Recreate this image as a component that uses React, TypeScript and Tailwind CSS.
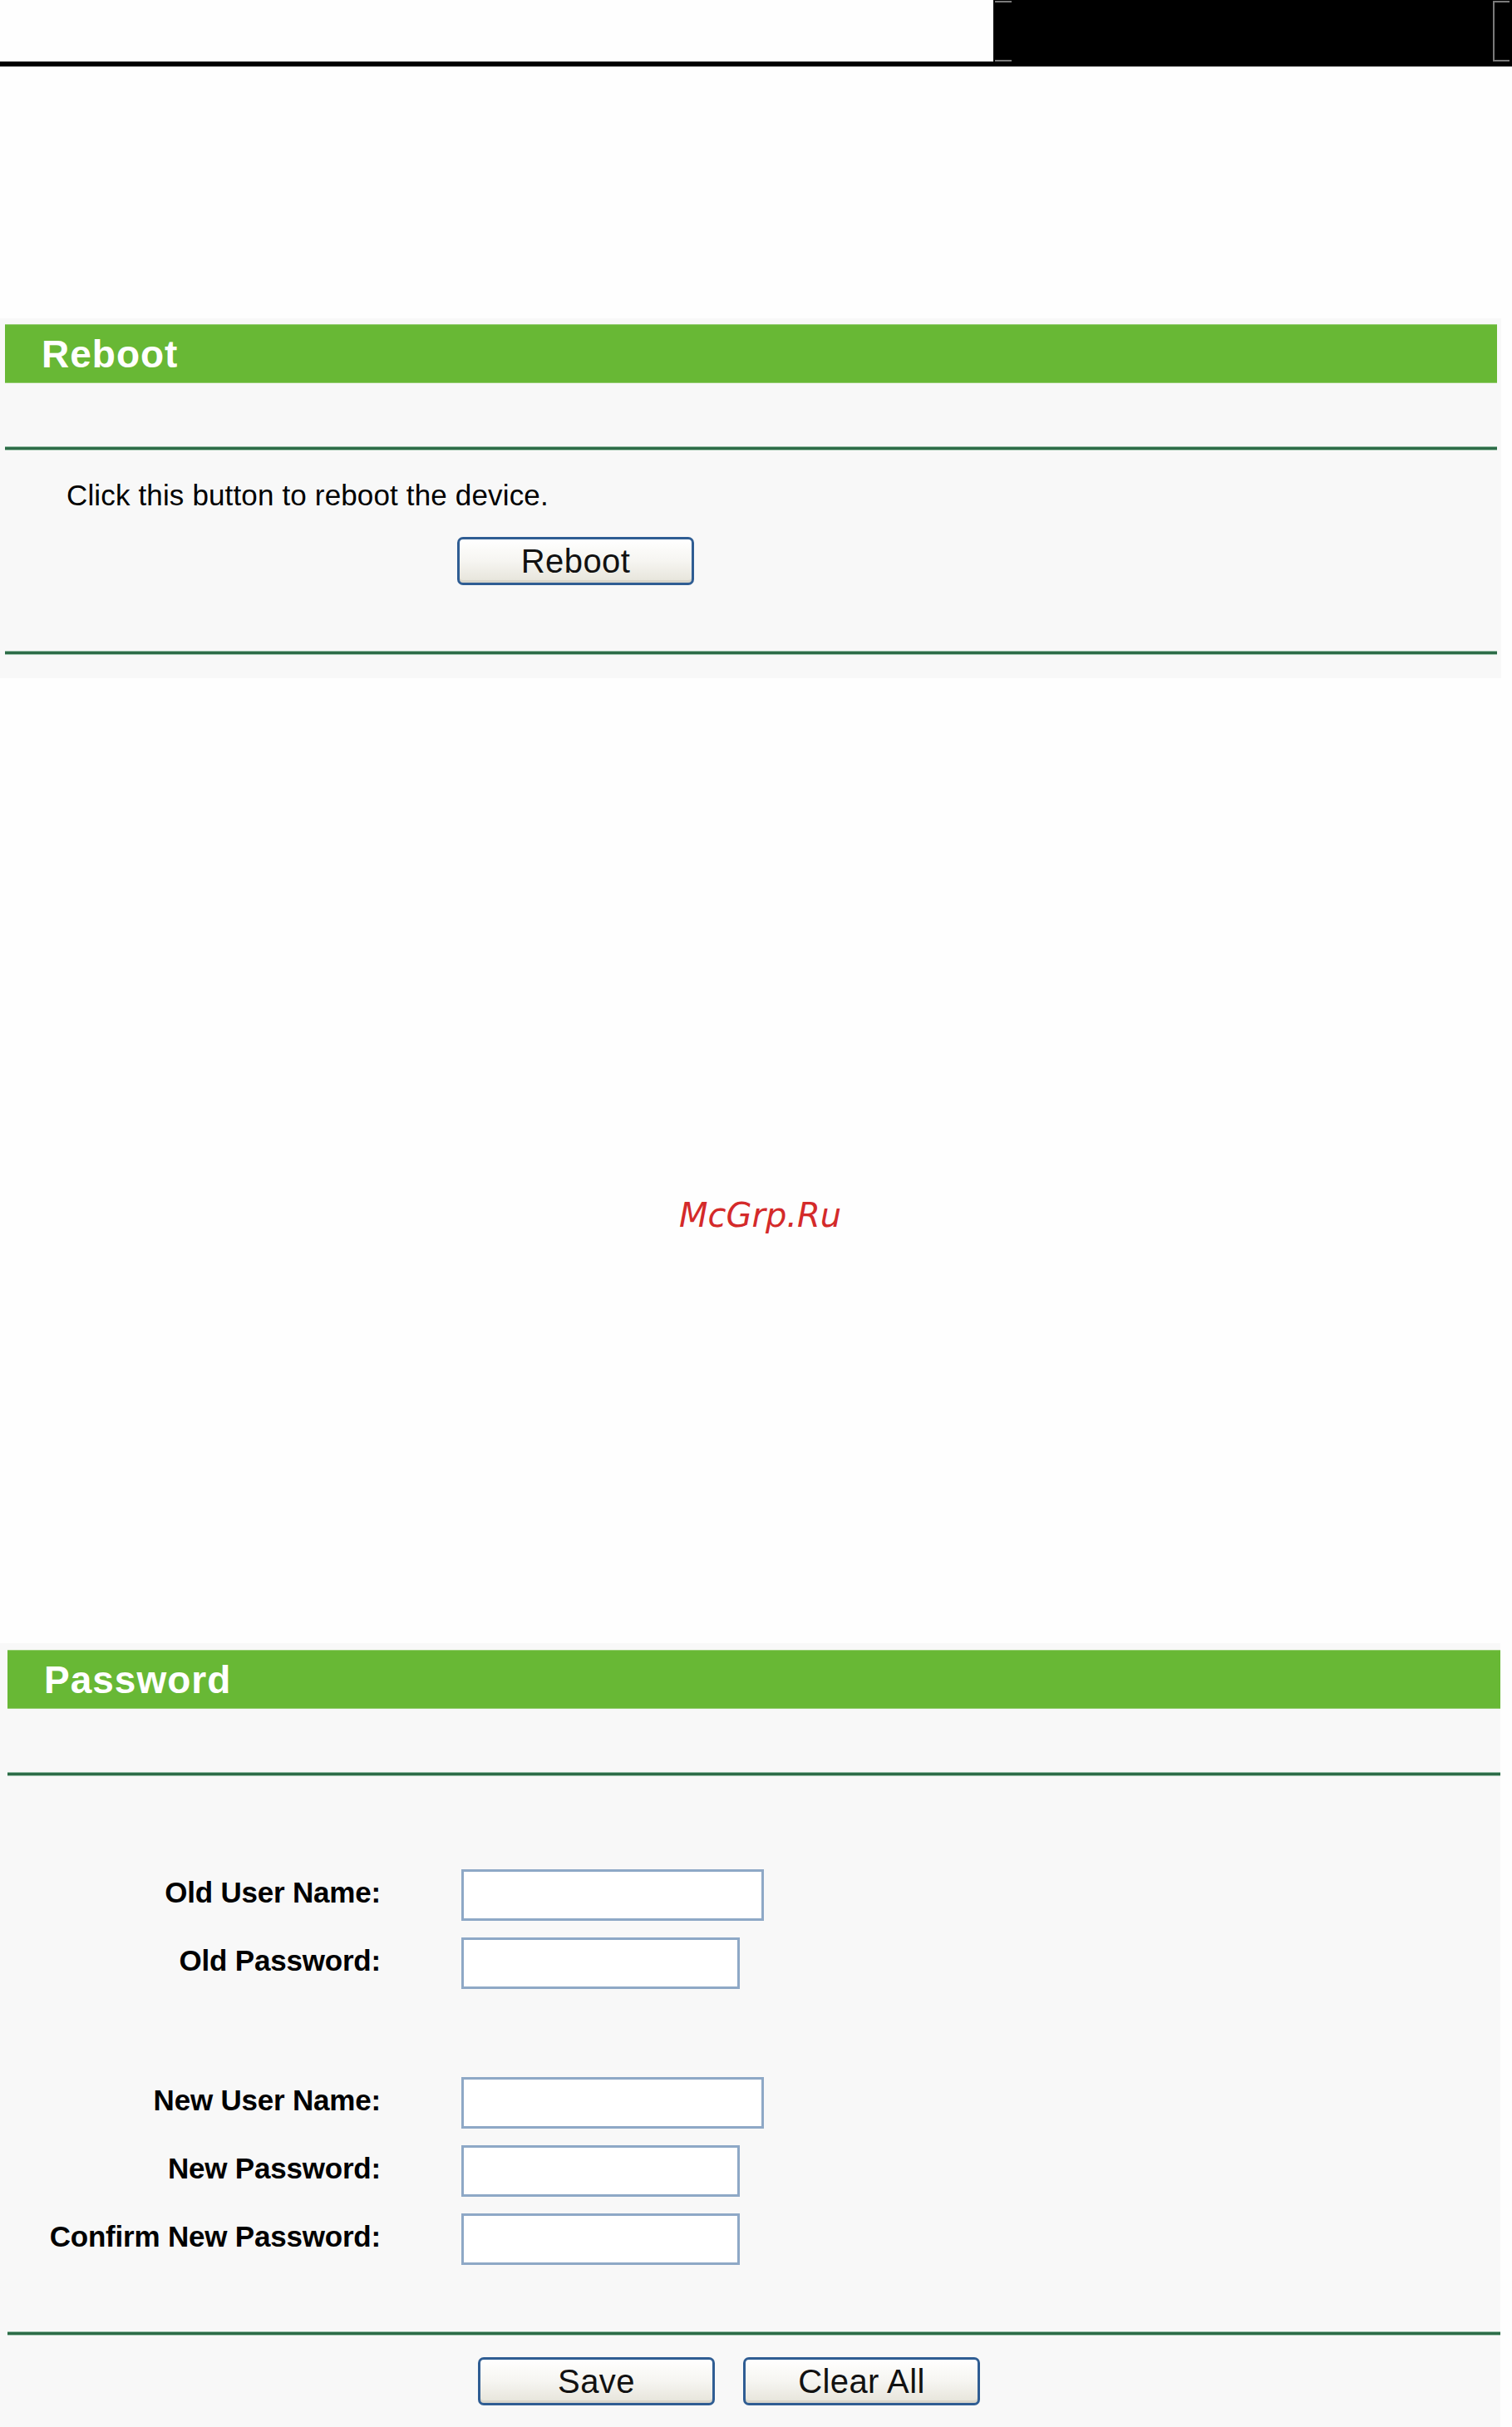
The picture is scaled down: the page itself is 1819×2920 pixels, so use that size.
import React from "react";

const sans = "font-['Liberation_Sans',Arial,sans-serif]";

function SectionHeader({ title, className = "" }: { title: string; className?: string }) {
  return (
    <div
      className={`h-[71px] bg-[#68b835] border-y border-[#93cc6f] flex items-center pl-[44px] ${className}`}
    >
      <span className="text-white font-bold text-[46px] leading-[64px] tracking-[1px]">{title}</span>
    </div>
  );
}

function Rule({ className = "" }: { className?: string }) {
  return (
    <div className={`flex flex-col ${className}`}>
      <div className="h-px bg-[#8fb9a0]" />
      <div className="h-[3px] bg-[#2d6c48]" />
      <div className="h-px bg-[#a9cbb6]" />
    </div>
  );
}

function XpButton({ label, className = "" }: { label: string; className?: string }) {
  return (
    <button
      type="button"
      className={`w-[285px] h-[58px] rounded-[7px] border-[3px] border-[#2f5d93] bg-gradient-to-b from-white via-[#f6f5f1] to-[#e6e4da] text-[40px] leading-none tracking-[0.4px] text-[#111] shadow-[inset_0_-3px_0_#d9d6cb] ${className}`}
    >
      {label}
    </button>
  );
}

function Field({ label, wide }: { label: string; wide?: boolean }) {
  return (
    <div className="flex h-[62px] items-center">
      <label className="w-[458px] text-right font-bold text-[35px] tracking-[-0.2px] text-black pb-[5px]">
        {label}
      </label>
      <input
        type="text"
        className={`ml-[97px] h-[62px] ${wide ? "w-[364px]" : "w-[335px]"} bg-white border-[3px] border-[#8ea8c6] outline-none`}
      />
    </div>
  );
}

export default function App() {
  return (
    <div className={`w-[1819px] h-[2920px] overflow-hidden bg-[#fefefe] ${sans}`}>
      {/* page top strip */}
      <div className="flex h-[74px]">
        <div className="flex-1" />
        <div className="relative w-[624px] bg-black">
          <span className="absolute left-[2px] top-[1px] w-[20px] h-[2px] bg-[#7a7a7a]" />
          <span className="absolute left-[2px] top-[72px] w-[20px] h-[2px] bg-[#7a7a7a]" />
          <span className="absolute left-[601px] top-[1px] w-[20px] h-[73px] border-l-2 border-y-2 border-[#7a7a7a]" />
        </div>
      </div>
      <div className="h-[6px] bg-black" />

      {/* Reboot */}
      <section className="mt-[303px] w-[1806px] h-[433px] bg-[#f8f8f8] pt-[7px]">
        <SectionHeader title="Reboot" className="ml-[6px] w-[1795px]" />
        <Rule className="mt-[76px] ml-[6px] w-[1795px]" />
        <p className="mt-[34px] pl-[80px] text-[35px] leading-[40px] tracking-[0.15px] text-black">
          Click this button to reboot the device.
        </p>
        <XpButton label="Reboot" className="mt-[30px] ml-[550px]" />
        <Rule className="mt-[79px] ml-[6px] w-[1795px]" />
      </section>

      <div className="mt-[622px] pl-[817px] font-['DejaVu_Sans',sans-serif] italic text-[40px] leading-[48px] text-[#d42a2a]">
        McGrp.Ru
      </div>

      {/* Password */}
      <section className="mt-[491px] w-[1805px] h-[943px] bg-[#f8f8f8] pt-[8px]">
        <SectionHeader title="Password" className="ml-[9px] w-[1796px]" />
        <Rule className="mt-[76px] ml-[9px] w-[1796px]" />

        <div className="mt-[112px] flex flex-col gap-[20px]">
          <Field label="Old User Name:" wide />
          <Field label="Old Password:" />
        </div>
        <div className="mt-[106px] flex flex-col gap-[20px]">
          <Field label="New User Name:" wide />
          <Field label="New Password:" />
          <Field label="Confirm New Password:" />
        </div>

        <Rule className="mt-[80px] ml-[9px] w-[1796px]" />
        <div className="mt-[26px] flex gap-[34px] pl-[575px]">
          <XpButton label="Save" />
          <XpButton label="Clear All" />
        </div>
      </section>
    </div>
  );
}
